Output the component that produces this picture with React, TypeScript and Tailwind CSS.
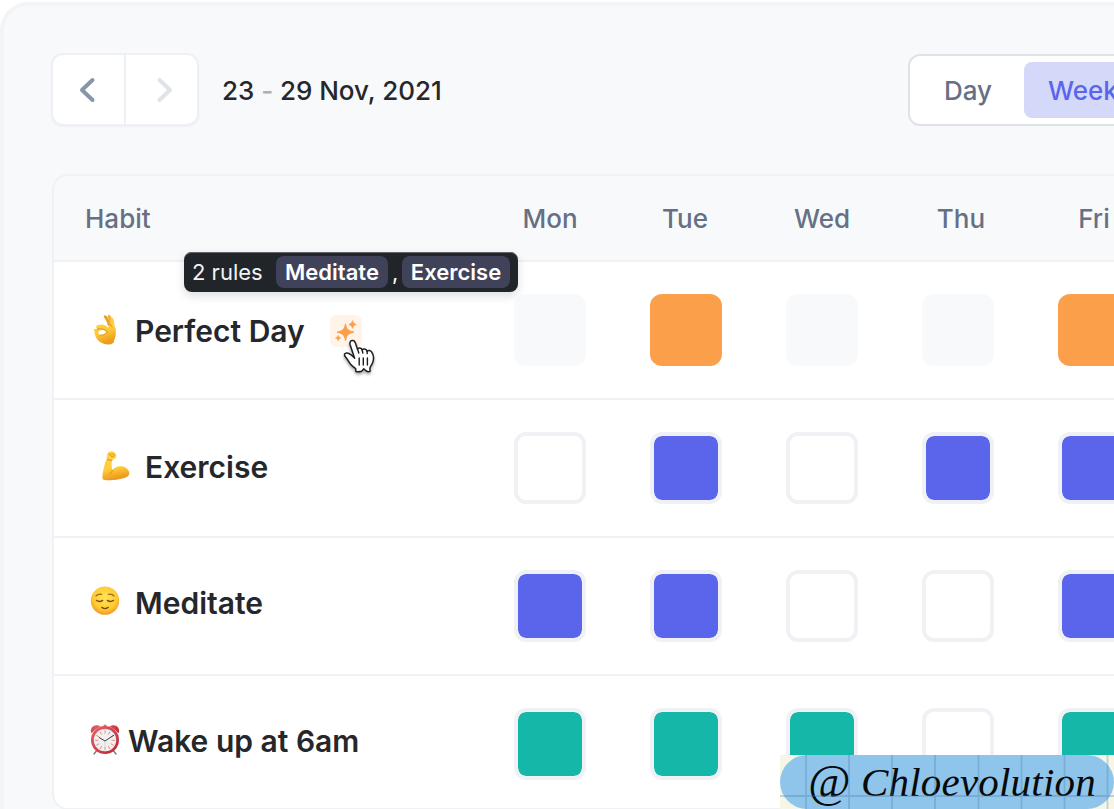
import React from "react";

type CellKind = "muted" | "orange" | "empty" | "indigo" | "teal";

const cellStyles: Record<CellKind, string> = {
  muted: "bg-[#f8f9fb]",
  orange: "bg-[#fb9f4b]",
  empty: "border-4 border-[#f0f1f5] bg-white",
  indigo: "border-4 border-[#f0f1f5] bg-[#5b65eb] bg-clip-padding",
  teal: "border-4 border-[#f0f1f5] bg-[#15b8a8] bg-clip-padding",
};

function OkHand() {
  return (
    <svg width="30" height="33" viewBox="33 36 90 99" className="mb-[3px] shrink-0">
      <defs>
        <linearGradient id="ok" x1="0" y1="0" x2="0.3" y2="1">
          <stop offset="0" stopColor="#ffd84a" />
          <stop offset="0.6" stopColor="#fdc935" />
          <stop offset="1" stopColor="#ee9c1f" />
        </linearGradient>
      </defs>
      <path d="M84 76C82 62 75 53 71 47Q72 41 78 44C85 49 90 60 92 71Z" fill="#e9a02a" />
      <path d="M88 79C90 64 86 53 83 46Q84 39 90 43C97 50 99 62 98 74Z" fill="#f4b62f" />
      <path
        fillRule="evenodd"
        d="M43 90C40 88 42 84 46 84L52 84C47 81 47 76 52 73C64 68 76 71 84 80L91 70L93 53C95 48 100 50 101 56L104 76C108 83 108 92 107 100C107 112 101 118 101 125C91 133 74 131 66 126C51 119 44 106 43 90ZM57 91C53 95 56 101 62 102C70 103 77 98 79 92C72 87 64 85 57 91Z"
        fill="url(#ok)"
      />
      <path d="M52 84C62 82 75 84 82 92M81 92C78 100 70 104 61 102M91 70L96 78" stroke="#d78b1c" strokeWidth="2.5" fill="none" strokeLinecap="round" />
    </svg>
  );
}

function Biceps() {
  return (
    <svg width="30" height="33" viewBox="63 444 90 99" className="mb-1 shrink-0">
      <defs>
        <linearGradient id="bi" x1="0" y1="0" x2="0.2" y2="1">
          <stop offset="0" stopColor="#ffd548" />
          <stop offset="0.65" stopColor="#ffcb38" />
          <stop offset="1" stopColor="#ec9a20" />
        </linearGradient>
      </defs>
      <path
        d="M67 532C67 514 73 490 80 473C80 463 81 456 87 453C92 449 99 451 105 455C110 459 110 468 106 472C102 476 98 476 96 478C94 489 95 500 97 508C103 498 114 495 126 496C138 498 147 507 148 517C148 525 140 530 130 532C110 538 86 539 71 536Q67 535 67 532Z"
        fill="url(#bi)"
      />
      <path d="M88 458C91 466 95 469 101 466C106 461 99 457 93 460M82 475Q89 480 96 478M97 508C96 513 93 517 89 519" stroke="#cf8419" strokeWidth="2.4" fill="none" strokeLinecap="round" />
    </svg>
  );
}

function RelievedFace() {
  return (
    <svg width="30" height="33" viewBox="30 45 90 99" className="mb-1 shrink-0">
      <defs>
        <radialGradient id="face" cx="0.5" cy="0.4" r="0.62">
          <stop offset="0" stopColor="#ffe652" />
          <stop offset="0.65" stopColor="#fecb35" />
          <stop offset="1" stopColor="#ee9521" />
        </radialGradient>
      </defs>
      <circle cx="75" cy="92" r="42.5" fill="url(#face)" />
      <path d="M48 78Q55 70 65 73M85 73Q95 70 102 78" stroke="#a9651b" strokeWidth="3.5" fill="none" strokeLinecap="round" />
      <path d="M49 91Q58 98 68 91M82 91Q92 98 101 91M65 112Q75 120 85 112" stroke="#7d4718" strokeWidth="4" fill="none" strokeLinecap="round" />
    </svg>
  );
}

function AlarmClock() {
  return (
    <svg width="30" height="33" viewBox="30 456 90 99" className="mb-1 shrink-0">
      <defs>
        <linearGradient id="clk" x1="0" y1="0" x2="1" y2="1">
          <stop offset="0" stopColor="#e9636b" />
          <stop offset="1" stopColor="#bd2331" />
        </linearGradient>
      </defs>
      <path d="M49 540L42 549M101 540L108 549" stroke="#78757a" strokeWidth="4" strokeLinecap="round" />
      <path d="M71 461H79V470H71Z" fill="#8c8c90" />
      <path d="M33 484C30 469 41 460 54 463L62 467Q45 472 36 486ZM117 484C120 469 109 460 96 463L88 467Q105 472 114 486Z" fill="url(#clk)" />
      <circle cx="75" cy="507" r="42" fill="url(#clk)" />
      <circle cx="75" cy="507" r="34" fill="#b8b9bd" />
      <circle cx="75" cy="508" r="33" fill="#f0f0f1" />
      <g stroke="#ef7c80" strokeWidth="2.5">
        {[0, 30, 60, 90, 120, 150, 180, 210, 240, 270, 300, 330].map((a) => (
          <path key={a} d="M75 478V488" transform={`rotate(${a} 75 508)`} />
        ))}
      </g>
      <path d="M75 510V534" stroke="#d7c9a0" strokeWidth="2" />
      <path d="M58 500L75 510L101 493" stroke="#3f4144" strokeWidth="3" fill="none" strokeLinecap="round" />
    </svg>
  );
}

function Sparkles() {
  return (
    <svg width="32" height="32" viewBox="0 0 32 32" fill="#fb9f4b">
      <path d="M15.5 8.8C16.8 14.6 17.6 15.6 24 17.2C17.6 18.8 16.8 19.8 15.5 25.6C14.2 19.8 13.4 18.8 7 17.2C13.4 15.6 14.2 14.6 15.5 8.8Z" stroke="#fb9f4b" strokeWidth="1" strokeLinejoin="round" />
      <path d="M22.6 5.4Q23.2 8.6 26.4 9.4Q23.2 10.2 22.6 13.4Q21.8 10.2 18.8 9.4Q21.8 8.6 22.6 5.4Z" stroke="#fb9f4b" strokeWidth="0.5" />
      <path d="M8.2 20.2Q8.7 22.4 11 23Q8.7 23.6 8.2 25.8Q7.7 23.6 5.4 23Q7.7 22.4 8.2 20.2Z" stroke="#fb9f4b" strokeWidth="0.4" />
    </svg>
  );
}

function HandCursor() {
  return (
    <svg width="40" height="44" viewBox="0 0 40 44" className="drop-shadow-[0_2px_1.5px_rgba(0,0,0,0.35)]">
      <path
        d="M14.6 22.2L10.2 9C9.5 6.5 10.2 4.8 12.2 4.6C14 4.4 15 5.6 15.6 7.4L17.5 13.2C18.4 11.6 21.4 11.6 22.2 13.9C23.3 12.4 26.4 12.5 27 15.2C28.3 13.8 30.7 14.3 31.6 16C33.6 18.5 34 22 33 25.6C32.4 28.4 30.2 30 29.9 32.4L30 35.4C28.2 35.9 26.6 35.7 25.4 34.2L23.8 32.8L21.6 35.2C19.6 35.8 17.7 35.8 15.9 35.5L15.7 32.8C13.6 30.8 11 29.5 9.7 27.2C8.4 24.7 6.8 22.5 5 20.3C3.9 18.4 4.7 17 6.7 16.9C9.9 16.8 12 19.7 14.6 22.2Z"
        fill="#fff"
        stroke="#1f1f22"
        strokeWidth="1.5"
        strokeLinejoin="round"
      />
      <path d="M17.5 13L18.8 17M22.2 14L22.8 17M27 15.4L27.3 17.6" stroke="#1f1f22" strokeWidth="1.4" strokeLinecap="round" />
      <path d="M19.2 22V29M23.3 22V29M27.4 22V29" stroke="#1f1f22" strokeWidth="1.4" strokeLinecap="round" />
    </svg>
  );
}

interface Habit {
  name: string;
  icon: React.ReactNode;
  pad: string;
  gap: string;
  cells: CellKind[];
  chip?: boolean;
}

const habits: Habit[] = [
  { name: "Perfect Day", icon: <OkHand />, pad: "pl-[37px] pt-0.5", gap: "gap-[14px]", cells: ["muted", "orange", "muted", "muted", "orange"], chip: true },
  { name: "Exercise", icon: <Biceps />, pad: "pl-[47px] pb-0.5", gap: "gap-[14px]", cells: ["empty", "indigo", "empty", "indigo", "indigo"] },
  { name: "Meditate", icon: <RelievedFace />, pad: "pl-9 pb-1.5", gap: "gap-[15px]", cells: ["indigo", "indigo", "empty", "empty", "indigo"] },
  { name: "Wake up at 6am", icon: <AlarmClock />, pad: "pl-9 pb-1.5", gap: "gap-2", cells: ["teal", "teal", "teal", "empty", "teal"] },
];

const days = [
  { name: "Mon", pad: "" },
  { name: "Tue", pad: "pr-0.5" },
  { name: "Wed", pad: "" },
  { name: "Thu", pad: "pl-1.5" },
  { name: "Fri", pad: "" },
];

export default function App() {
  return (
    <div className="relative h-[809px] w-[1114px] overflow-hidden bg-white pt-[2px] font-['Inter',sans-serif] text-[#26272b]">
      <div className="h-[860px] w-[1200px] rounded-tl-[28px] border-t-4 border-l-4 border-[#f3f4f6] bg-[#f8f9fb] pt-[47px] pl-[47px]">
        <div className="flex h-[73px] items-center">
          <div className="flex h-[73px] w-[148px] shrink-0 overflow-hidden rounded-xl border-2 border-[#eff0f5] bg-white shadow-[0_1px_2px_rgba(16,24,40,0.04)]">
            <button className="flex w-[73px] items-center justify-center border-r-2 border-[#eff0f5] pr-1">
              <svg width="24" height="30" viewBox="0 0 24 30" fill="none">
                <path d="M17.500 5L7 15L17.500 25" stroke="#8995a8" strokeWidth="4" strokeLinecap="round" strokeLinejoin="round" />
              </svg>
            </button>
            <button className="flex flex-1 items-center justify-center pl-1.5">
              <svg width="24" height="30" viewBox="0 0 24 30" fill="none">
                <path d="M6.500 5L17 15L6.500 25" stroke="#e1e3ea" strokeWidth="4" strokeLinecap="round" strokeLinejoin="round" />
              </svg>
            </button>
          </div>
          <div className="ml-[23px] w-[686px] shrink-0 pt-0.5 text-[26px] leading-8 font-medium tracking-[-0.04px] whitespace-nowrap">
            23 <span className="text-[#a5b1c0]">-</span> 29 Nov, 2021
          </div>
          <div className="flex h-[72px] w-[260px] shrink-0 items-center rounded-xl border-2 border-[#dfe2e8] bg-white text-[26px] font-medium">
            <span className="w-[114px] pt-0.5 pl-[34px] text-[#667085]">Day</span>
            <span className="flex h-14 w-[116px] items-center rounded-lg bg-[#d4d9fa] pt-0.5 pl-[24px] text-[#5b65eb]">Week</span>
          </div>
        </div>

        <div className="mt-[48px] ml-[1px] h-[636px] w-[1140px] overflow-hidden rounded-2xl border-2 border-[#f0f1f4] bg-white">
          <div className="flex h-[86px] items-center border-b-2 border-[#f0f1f4] bg-[#f8f9fb] text-[26px] font-medium text-[#667085]">
            <div className="w-[428px] shrink-0 pl-[31px]">Habit</div>
            {days.map((d) => (
              <div key={d.name} className={`w-[136px] shrink-0 text-center ${d.pad}`}>
                {d.name}
              </div>
            ))}
          </div>
          {habits.map((h) => (
            <div key={h.name} className="flex h-[138px] items-center border-b-2 border-[#f0f1f5] last:border-b-0 last:pb-0.5">
              <div className={`flex w-[428px] shrink-0 items-center ${h.pad} ${h.gap}`}>
                {h.icon}
                <span className="text-[30px] leading-9 font-semibold whitespace-nowrap">{h.name}</span>
                {h.chip && (
                  <span className="ml-[11px] size-8 shrink-0 rounded-md bg-[#fff3ea]">
                    <Sparkles />
                  </span>
                )}
              </div>
              {h.cells.map((c, i) => (
                <div key={i} className="flex w-[136px] shrink-0 justify-center">
                  <div className={`size-[72px] rounded-xl ${cellStyles[c]}`} />
                </div>
              ))}
            </div>
          ))}
        </div>
      </div>

      <div className="absolute top-[252px] left-[184px] flex h-10 w-[334px] items-center rounded-lg bg-[#212529] pl-2 text-[22px] whitespace-nowrap text-white shadow-[0_4px_10px_rgba(16,24,40,0.14),inset_0_1px_0_#62666a]">
        <span className="w-[84px] shrink-0 text-[#f1f2f4]">2 rules</span>
        <span className="flex h-8 w-28 shrink-0 items-center justify-center rounded-lg bg-[#3f4259] font-semibold">Meditate</span>
        <span className="w-3.5 shrink-0 pl-1">,</span>
        <span className="flex h-8 w-[108px] shrink-0 items-center justify-center rounded-lg bg-[#3f4259] font-semibold">Exercise</span>
      </div>

      <div className="absolute top-[336px] left-[340px]">
        <HandCursor />
      </div>

      <div className="absolute top-[755px] left-[780px] h-[54px] w-[334px] bg-[#f7f5e6]">
        <div className="flex h-[54px] w-[334px] items-center overflow-hidden rounded-full bg-[#8fc5ea] pl-7 font-['Liberation_Serif',serif] leading-[54px] whitespace-nowrap text-[#08090b] italic">
          <span className="w-[53px] shrink-0 text-[46px]">@</span>
          <span className="text-[41px] tracking-[0.2px]">Chloevolution</span>
        </div>
        <svg width="334" height="54" className="absolute inset-0">
          <path d="M26 0V54M69 0V54M112 0V54M155 0V54M198.500 0V54M241.500 0V54M284.500 0V54M327.500 0V54M0 41H334" stroke="#4679aa" strokeOpacity="0.3" strokeWidth="1.8" />
        </svg>
      </div>
    </div>
  );
}
